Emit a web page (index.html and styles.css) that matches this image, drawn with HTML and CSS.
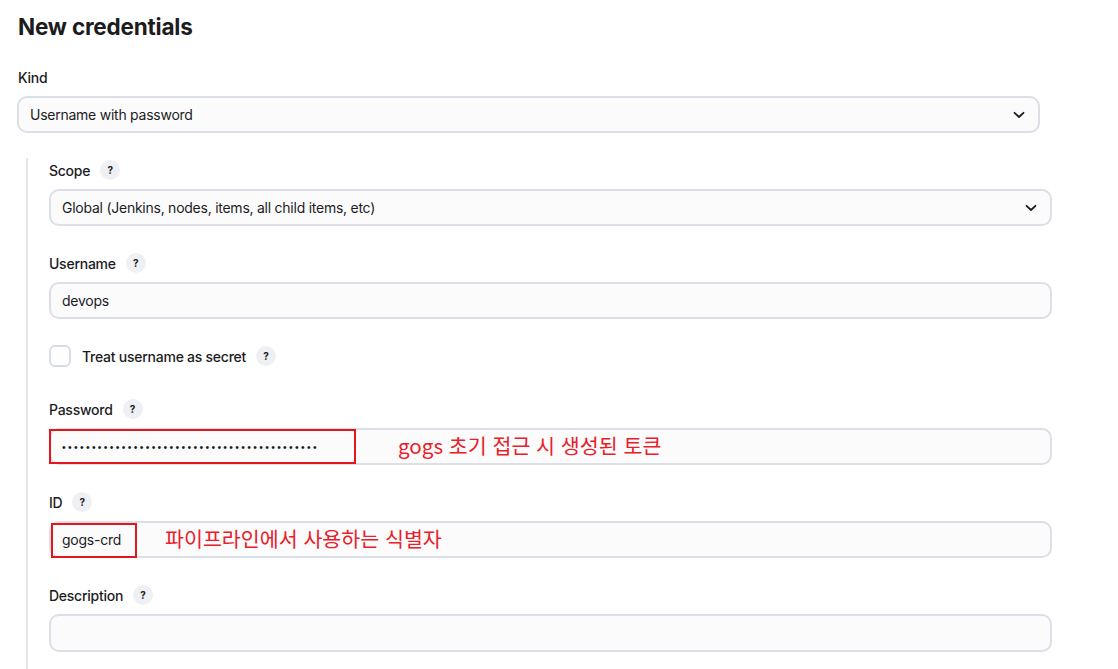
FILE: index.html
```html
<!DOCTYPE html>
<html lang="ko">
<head>
    <meta charset="UTF-8">
    <meta name="viewport" content="width=device-width, initial-scale=1.0">
    <title>New credentials</title>
    <link rel="stylesheet" href="styles.css">
</head>
<body>
    <div class="page">
        <h1 class="title">New credentials</h1>

        <!-- Kind -->
        <div class="field kind">
            <div class="label">Kind</div>
            <div class="select">
                <span>Username with password</span>
                <svg class="chevron" width="12" height="8" viewBox="0 0 12 8"><path d="M1.5 1.8 L6 6 L10.5 1.8" fill="none" stroke="#1c1c1e" stroke-width="1.8" stroke-linecap="round" stroke-linejoin="round"/></svg>
            </div>
        </div>

        <div class="nested">
            <div class="field">
                <div class="label">Scope <span class="help">?</span></div>
                <div class="select">
                    <span>Global (Jenkins, nodes, items, all child items, etc)</span>
                    <svg class="chevron" width="12" height="8" viewBox="0 0 12 8"><path d="M1.5 1.8 L6 6 L10.5 1.8" fill="none" stroke="#1c1c1e" stroke-width="1.8" stroke-linecap="round" stroke-linejoin="round"/></svg>
                </div>
            </div>

            <div class="field">
                <div class="label">Username <span class="help">?</span></div>
                <input class="input" type="text" value="devops">
            </div>

            <div class="check-row">
                <span class="checkbox"></span>
                <span class="check-label">Treat username as secret</span>
                <span class="help">?</span>
            </div>

            <div class="field">
                <div class="label">Password <span class="help">?</span></div>
                <div class="marked">
                    <div class="input"><span class="dots">•••••••••••••••••••••••••••••••••••••••••••</span></div>
                    <span class="mark mark-pw"></span>
                    <span class="note note-pw">gogs 초기 접근 시 생성된 토큰</span>
                </div>
            </div>

            <div class="field">
                <div class="label">ID <span class="help">?</span></div>
                <div class="marked">
                    <input class="input" type="text" value="gogs-crd">
                    <span class="mark mark-id"></span>
                    <span class="note note-id">파이프라인에서 사용하는 식별자</span>
                </div>
            </div>

            <div class="field">
                <div class="label">Description <span class="help">?</span></div>
                <div class="input textarea"></div>
            </div>
        </div>
    </div>
</body>
</html>
```

FILE: styles.css
```css
body {
    margin: 0;
    background: #fff;
    color: #1c1c1e;
    font-family: Inter, "Noto Sans", sans-serif;
    font-size: 14px;
    letter-spacing: -0.25px;
}

.page {
    padding: 14px 0 0 17px;
}

.title {
    margin: 0 0 27px 1px;
    font-size: 22.5px;
    font-weight: 700;
    line-height: 26px;
    letter-spacing: -0.2px;
}

.field {
    margin-bottom: 27px;
}

.kind {
    width: 1023px;
    margin-bottom: 25px;
}

.label {
    display: flex;
    align-items: center;
    height: 20px;
    margin: 0 0 9px 0;
    font-weight: 500;
}

.kind .label {
    margin-left: 1px;
}

.help {
    display: inline-flex;
    align-items: center;
    justify-content: center;
    width: 20px;
    height: 20px;
    margin-left: 10px;
    border-radius: 50%;
    background: #eef0f4;
    font-size: 10px;
    font-weight: 700;
    letter-spacing: 0;
}

.select,
.input {
    box-sizing: border-box;
    display: flex;
    align-items: center;
    justify-content: space-between;
    width: 100%;
    height: 37px;
    padding: 0 12px 0 11px;
    border: 2px solid #dcdfe8;
    border-radius: 10px;
    background: #fbfbfc;
    font-family: inherit;
    font-size: 14px;
    letter-spacing: -0.25px;
    color: #1c1c1e;
    outline: none;
}

.dots {
    font-family: "Liberation Sans", sans-serif;
    font-size: 10.5px;
    letter-spacing: 2.3px;
    color: #1c1c1e;
}

.chevron {
    margin-right: 1px;
}

.nested {
    width: 1003px;
    margin: 0 0 0 9px;
    padding: 2px 0 20px 21px;
    border-left: 2px solid #e2e5ec;
}

.check-row {
    display: flex;
    align-items: center;
    height: 22px;
    margin: -1px 0 32px;
}

.checkbox {
    box-sizing: border-box;
    width: 22px;
    height: 22px;
    border: 2px solid #d8dce6;
    border-radius: 6px;
    background: #fff;
}

.check-label {
    margin-left: 11px;
    font-weight: 500;
}

.marked {
    position: relative;
}

.mark {
    position: absolute;
    box-sizing: border-box;
    border: 2px solid #e3151d;
}

.mark-pw {
    left: 0;
    top: 1px;
    width: 307px;
    height: 35px;
}

.mark-id {
    left: 2px;
    top: 2px;
    width: 86px;
    height: 35px;
}

.note {
    position: absolute;
    color: #e8202a;
    font-family: "Noto Sans CJK KR", "Noto Sans", sans-serif;
    font-size: 20.6px;
    line-height: 24px;
    letter-spacing: 0;
}

.note-pw {
    left: 349px;
    top: 5px;
}

.note-id {
    left: 116px;
    top: 5px;
}

.textarea {
    height: 38px;
}
```
